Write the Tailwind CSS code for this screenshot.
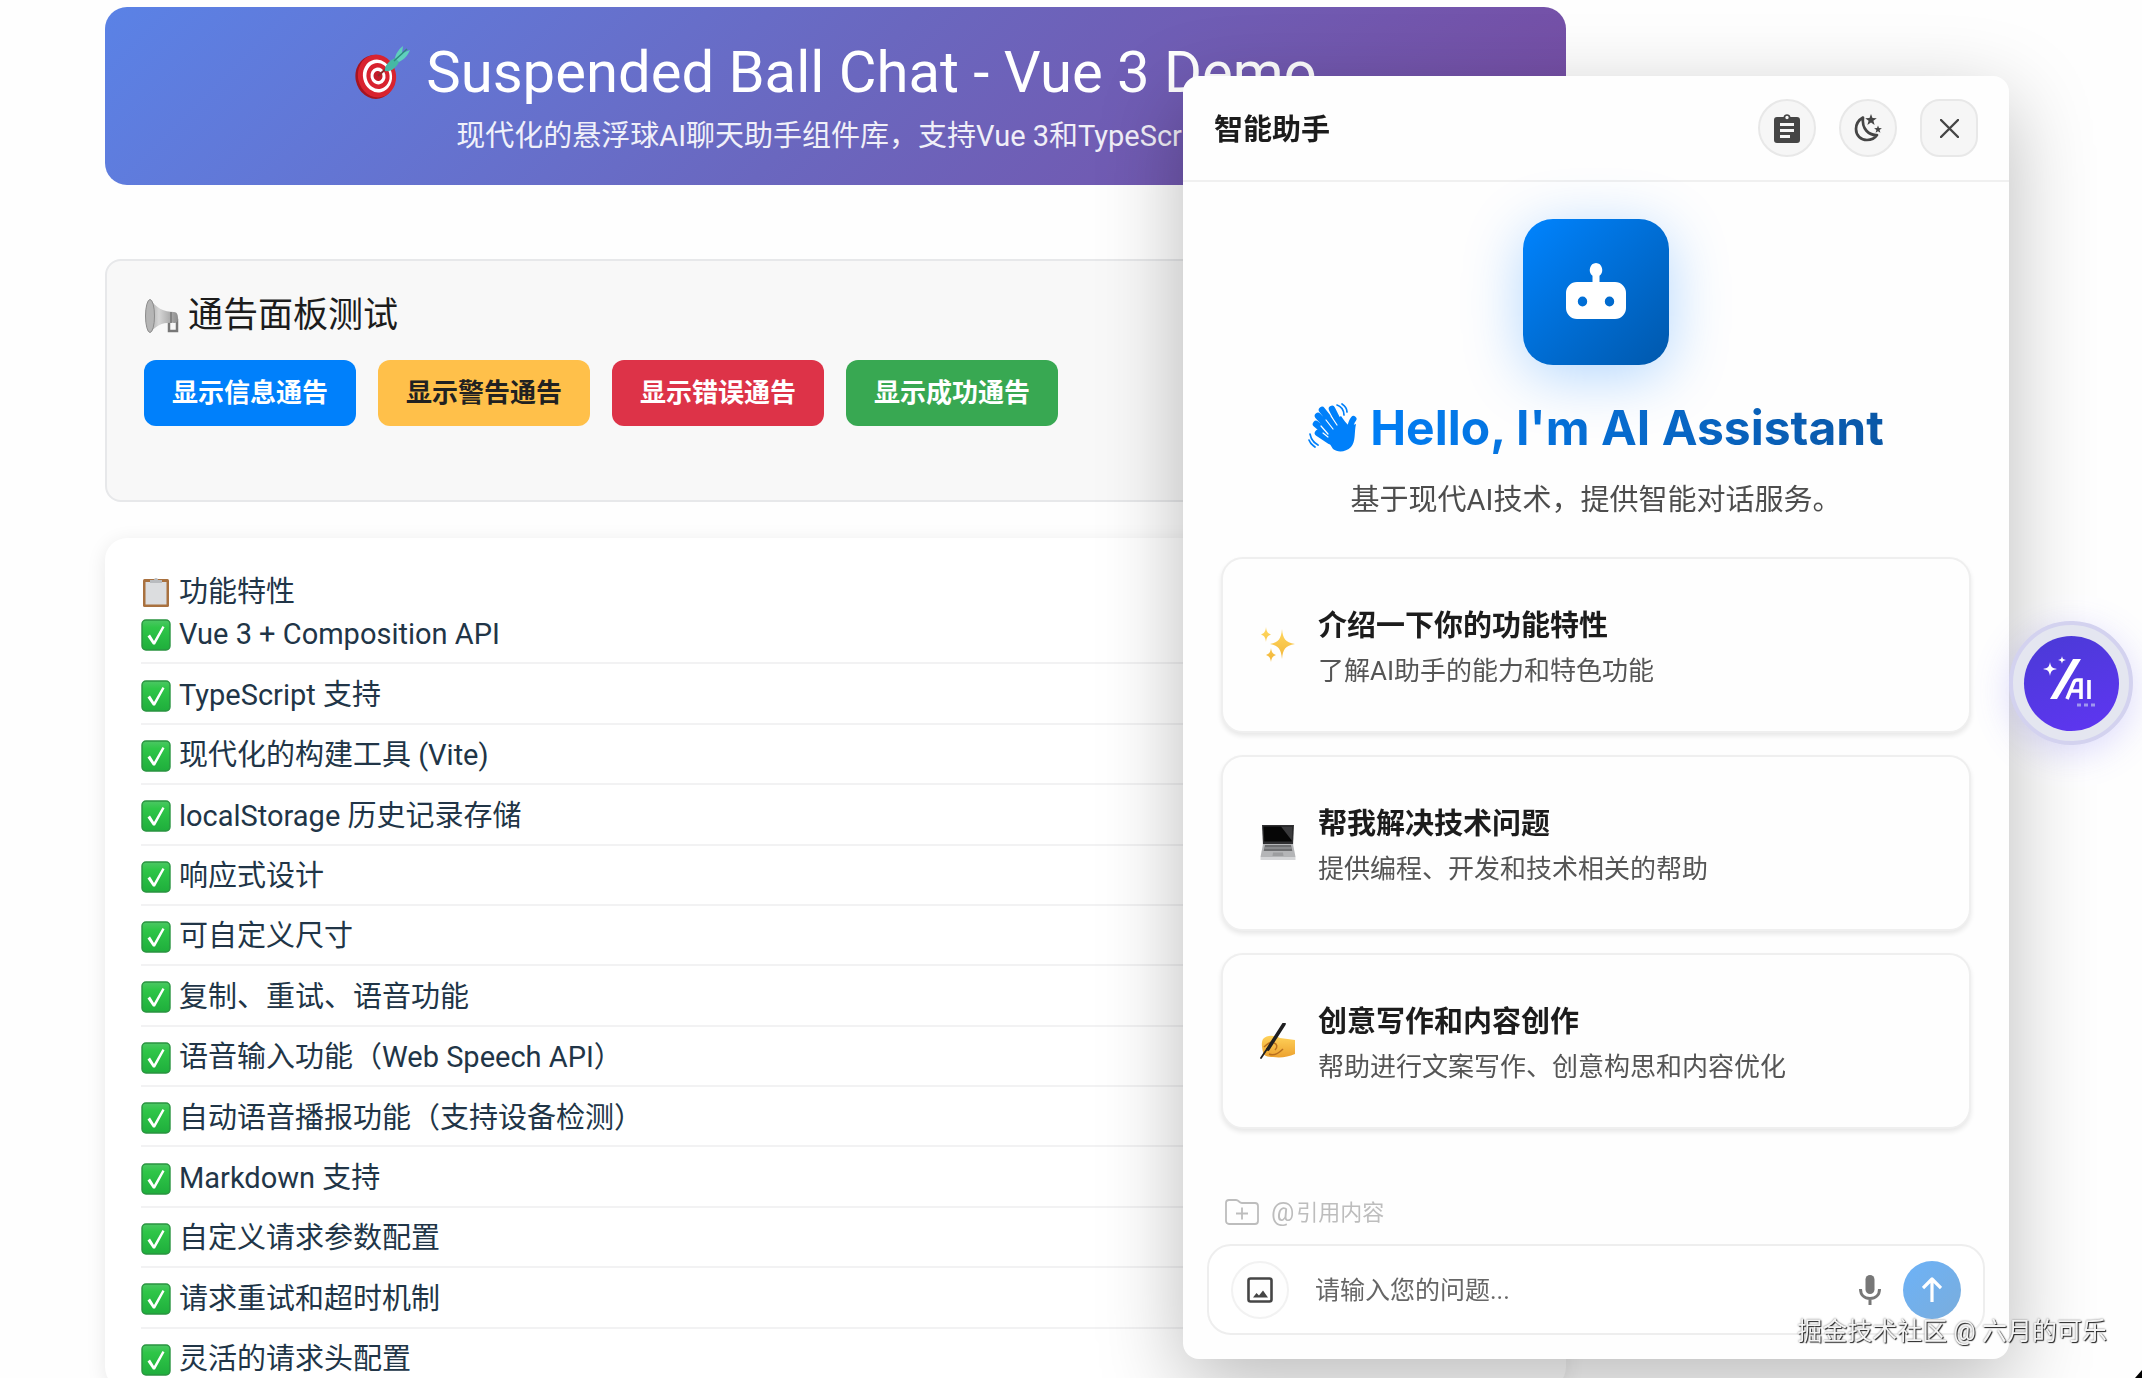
<!DOCTYPE html>
<html lang="zh-CN">
<head>
<meta charset="utf-8">
<meta name="viewport" content="width=device-width, initial-scale=1">
<title>Suspended Ball Chat - Vue 3 Demo</title>
<script src="https://cdn.jsdelivr.net/npm/@tailwindcss/browser@4"></script>
</head>
<body class="h-screen overflow-hidden bg-[#fefefe] font-[Roboto,'Noto_Sans_CJK_SC',sans-serif] text-[29px] text-[#213547]">

<!-- Shared glyphs -->
<svg class="absolute size-0" aria-hidden="true">
  <defs>
    <linearGradient id="checkFill" x1="0" y1="0" x2="0" y2="1">
      <stop offset="0" stop-color="#4cc764"/><stop offset=".25" stop-color="#2fc648"/><stop offset="1" stop-color="#1fae3c"/>
    </linearGradient>
    <linearGradient id="megaFill" x1="0" y1="0" x2="1" y2="0">
      <stop offset="0" stop-color="#9a9a9a"/><stop offset=".4" stop-color="#d6d6d6"/><stop offset="1" stop-color="#8e8e8e"/>
    </linearGradient>
    <linearGradient id="handFill" x1="0" y1="0" x2="0" y2="1">
      <stop offset="0" stop-color="#ffd25a"/><stop offset="1" stop-color="#eda22f"/>
    </linearGradient>
    <linearGradient id="starFill" x1="0" y1="0" x2="0" y2="1">
      <stop offset="0" stop-color="#ffd75e"/><stop offset="1" stop-color="#f3b73a"/>
    </linearGradient>
    <symbol id="check" viewBox="0 0 30 32">
      <rect x="1" y="1" width="28" height="30" rx="4" fill="url(#checkFill)" stroke="#2a9440" stroke-width="1.4"/>
      <path d="M6.500 17.500 9 15.500l4 6.500L21.500 7l2 1.200L14 25.500h-2z" fill="#fff"/>
    </symbol>
  </defs>
</svg>

<main class="flex flex-col pt-[7px] pl-[105px] pr-[576px]">
  <header class="flex h-[178px] flex-col items-center justify-center rounded-[22px] bg-linear-135 from-[#5a82e6] via-[#6a67bf] to-[#764ba2] text-white">
    <h1 class="flex items-center gap-4 whitespace-nowrap pt-1 text-[58px] leading-[68px]">
      <svg class="size-14" viewBox="0 0 56 56" aria-hidden="true">
        <ellipse cx="21" cy="33" rx="19.500" ry="22" transform="rotate(-12 21 33)" fill="#a51420"/>
        <ellipse cx="23" cy="32" rx="19" ry="21.500" transform="rotate(-12 23 32)" fill="#d8232f"/>
        <ellipse cx="23.500" cy="32" rx="14.500" ry="16.500" transform="rotate(-12 23.5 32)" fill="#fff"/>
        <ellipse cx="24" cy="32" rx="11.500" ry="13" transform="rotate(-12 24 32)" fill="#d8232f"/>
        <ellipse cx="24" cy="32" rx="7.500" ry="8.500" transform="rotate(-12 24 32)" fill="#fff"/>
        <ellipse cx="24" cy="32" rx="4.500" ry="5" transform="rotate(-12 24 32)" fill="#c41b28"/>
        <path d="M24 32 35 22" stroke="#8c2b2b" stroke-width="2"/>
        <path d="M31 27c-1-5 4-10 10-13l4 4c-3 6-8 10-14 9z" fill="#45b8a4"/>
        <path d="M41 14c1-5 5-10 8-12l-1 7 8-3c-2 5-5 9-11 12z" fill="#5fd0bd"/>
        <path d="M40 17 53 5" stroke="#2c8b7c" stroke-width="1.500"/>
      </svg>
      Suspended Ball Chat - Vue 3 Demo
    </h1>
    <p class="whitespace-nowrap pt-2 leading-[44px] opacity-90">现代化的悬浮球AI聊天助手组件库，支持Vue 3和TypeScript</p>
  </header>

  <section class="mt-[74px] h-[243px] rounded-2xl border-2 border-[#e7e8ea] bg-[#f8f8f8] px-[37px] pt-[29px]">
    <h2 class="flex items-center gap-2 text-[35px] leading-[52px] text-[#1c1c1c]">
      <svg class="size-9" viewBox="0 0 36 36" aria-hidden="true">
        <path d="M25 22h8v11h-8z" fill="none" stroke="#777" stroke-width="2.500"/>
        <path d="M6 1c6 9 14 13 24 13 3 0 4 3 4 6s-1 5-4 5c-10-1-18 2-24 10C1 26 1 10 6 1z" fill="url(#megaFill)"/>
        <ellipse cx="6" cy="18" rx="4.500" ry="16.500" fill="#b5b5b5" stroke="#8c8c8c"/>
        <path d="M27 14v11" stroke="#777" stroke-width="1.500"/>
      </svg>
      通告面板测试
    </h2>
    <div class="mt-[18px] flex gap-[22px] text-[26px] font-bold">
      <button class="h-[66px] w-[212px] rounded-xl bg-[#0080fb] text-white">显示信息通告</button>
      <button class="h-[66px] w-[212px] rounded-xl bg-[#ffc04a] text-[#212121]">显示警告通告</button>
      <button class="h-[66px] w-[212px] rounded-xl bg-[#dd3348] text-white">显示错误通告</button>
      <button class="h-[66px] w-[212px] rounded-xl bg-[#38a852] text-white">显示成功通告</button>
    </div>
  </section>

  <section class="mt-9 rounded-[22px] bg-white px-9 pt-9 shadow-[0_4px_20px_rgb(0_0_0/0.09)]">
    <h2 class="flex h-[30px] items-center gap-2 pt-1.5 leading-[30px]">
      <svg class="h-8 w-[30px] shrink-0" viewBox="0 0 30 32" aria-hidden="true">
        <rect x="2" y="3" width="26" height="28" rx="1.500" fill="#a9713f"/>
        <rect x="4.500" y="6" width="21" height="22.500" fill="#dcdddf"/>
        <path d="M9 7V4h4a2 2 0 0 1 4 0h4v3z" fill="#b9bbbe"/>
      </svg>
      功能特性
    </h2>
    <ul class="grid h-[785px] auto-rows-fr [&>li]:flex [&>li]:items-center [&>li]:gap-2 [&>li]:border-b-2 [&>li]:border-[#f2f2f3] [&>li]:pt-1 [&_svg]:h-8 [&_svg]:w-[30px]">
      <li><svg aria-hidden="true"><use href="#check"/></svg>Vue 3 + Composition API</li>
      <li><svg aria-hidden="true"><use href="#check"/></svg>TypeScript 支持</li>
      <li><svg aria-hidden="true"><use href="#check"/></svg>现代化的构建工具 (Vite)</li>
      <li><svg aria-hidden="true"><use href="#check"/></svg>localStorage 历史记录存储</li>
      <li><svg aria-hidden="true"><use href="#check"/></svg>响应式设计</li>
      <li><svg aria-hidden="true"><use href="#check"/></svg>可自定义尺寸</li>
      <li><svg aria-hidden="true"><use href="#check"/></svg>复制、重试、语音功能</li>
      <li><svg aria-hidden="true"><use href="#check"/></svg>语音输入功能（Web Speech API）</li>
      <li><svg aria-hidden="true"><use href="#check"/></svg>自动语音播报功能（支持设备检测）</li>
      <li><svg aria-hidden="true"><use href="#check"/></svg>Markdown 支持</li>
      <li><svg aria-hidden="true"><use href="#check"/></svg>自定义请求参数配置</li>
      <li><svg aria-hidden="true"><use href="#check"/></svg>请求重试和超时机制</li>
      <li><svg aria-hidden="true"><use href="#check"/></svg>灵活的请求头配置</li>
    </ul>
  </section>
</main>

<!-- Chat dialog -->
<aside class="fixed top-[76px] right-[133px] bottom-[19px] flex w-[826px] flex-col rounded-2xl bg-[#fefefe] text-[#1c1c1c] shadow-[0_26px_84px_rgb(0_0_0/0.27)]">
  <header class="flex h-[106px] shrink-0 items-center justify-between border-b-2 border-[#f0f0f0] px-[31px]">
    <h2 class="pt-1.5 font-bold">智能助手</h2>
    <div class="flex gap-[23px] text-[#454545] [&>button]:flex [&>button]:size-[58px] [&>button]:items-center [&>button]:justify-center [&>button]:border-2 [&>button]:border-[#e8e8e8] [&>button]:bg-[#f6f6f6]">
      <button class="rounded-full" aria-label="记录">
        <svg class="h-[29px] w-[26px]" viewBox="0 0 26 29" aria-hidden="true">
          <path fill="currentColor" fill-rule="evenodd" d="M3 3h6.500a3.600 3.600 0 0 1 7 0H23a3 3 0 0 1 3 3v20a3 3 0 0 1-3 3H3a3 3 0 0 1-3-3V6a3 3 0 0 1 3-3zm10-1.200a1.700 1.700 0 1 0 0 3.400 1.700 1.700 0 0 0 0-3.400zM6 9v3h14V9zm0 6v3h14v-3zm0 6v3h10v-3z"/>
        </svg>
      </button>
      <button class="rounded-full" aria-label="深色模式">
        <svg class="size-7" viewBox="0 0 28 28" aria-hidden="true">
          <path d="M9 3.500C5.500 5.500 2 9.500 2 15c0 6.500 4.800 11 11 11 4.500 0 8-2 10-5-8 .5-15.500-6-14-17.500z" fill="none" stroke="currentColor" stroke-width="2.700" stroke-linejoin="round"/>
          <path fill="currentColor" d="m17 0 1.500 4 4.300.2-3.400 2.600 1.200 4.200-3.600-2.400-3.600 2.400 1.200-4.200-3.400-2.600 4.300-.2z"/>
          <path fill="currentColor" d="m24 11.500 1 2.600 2.900.1-2.300 1.800.8 2.800-2.400-1.600-2.400 1.600.8-2.800-2.300-1.800 2.900-.1z"/>
        </svg>
      </button>
      <button class="rounded-[20px]" aria-label="关闭">
        <svg class="size-[19px]" viewBox="0 0 19 19" aria-hidden="true"><path d="m1 1 17 17M18 1 1 18" stroke="currentColor" stroke-width="2.400" stroke-linecap="round"/></svg>
      </button>
    </div>
  </header>

  <div class="flex grow flex-col items-center px-[38px] pt-[37px]">
    <div class="flex size-[146px] items-center justify-center rounded-[30px] bg-linear-135 from-[#0084ff] to-[#0058ac] shadow-[0_11px_60px_rgb(0_123_255/0.3)]">
      <svg class="h-[58px] w-16" viewBox="0 0 64 58" aria-hidden="true">
        <path fill="#fff" fill-rule="evenodd" d="M32 0a6.500 7 0 0 1 3.500 12.700V19H51a11 11 0 0 1 11 11v15a11 11 0 0 1-11 11H13A11 11 0 0 1 2 45V30a11 11 0 0 1 11-11h15.500v-6.300A6.500 7 0 0 1 32 0zM18.500 33.500a4.700 5 0 1 0 0 10 4.700 5 0 0 0 0-10zm27 0a4.700 5 0 1 0 0 10 4.700 5 0 0 0 0-10z"/>
      </svg>
    </div>
    <h1 class="mt-8 flex items-center gap-3 whitespace-nowrap font-[Inter,sans-serif] text-[48px] leading-[62px] font-bold">
      <svg class="size-[50px]" viewBox="0 0 50 50" aria-hidden="true">
        <g fill="none" stroke="#0080fa" stroke-width="6.500" stroke-linecap="round">
          <path d="M29 26 14 7M24 28 10 13M22 33 8 21M22 38 10 30M34 26 24 6"/>
          <path stroke-width="6" d="M41 32c1-6 1-12 4.500-16"/>
        </g>
        <path fill="#0080fa" d="M13 27 33 13c3 4 5 8 9 10l6-2c-2 9 0 17-5 23-5 5-13 6-18 2z"/>
        <path d="m18 17 7 9M13 23l7 8M23 13l6 9M15 30l5 4" stroke="#fff" stroke-width="1.200" stroke-linecap="round"/>
        <path d="M29 2c4 1 7 5 7 10M34 1c3 2 5 5 5 8M2 31c1 5 4 9 8 11M1 37c1 3 3 5 6 7" fill="none" stroke="#0080fa" stroke-width="1.700" stroke-linecap="round"/>
      </svg>
      <span class="bg-linear-90 from-[#007ef5] to-[#0a57a6] bg-clip-text text-transparent">Hello, I'm AI Assistant</span>
    </h1>
    <p class="mt-[18px] leading-[46px] text-[#4d4d4d]">基于现代AI技术，提供智能对话服务。</p>

    <div class="mt-[34px] grid w-full gap-[22px] [&>button]:flex [&>button]:h-[176px] [&>button]:items-center [&>button]:gap-[22px] [&>button]:rounded-[22px] [&>button]:border-2 [&>button]:border-[#efefef] [&>button]:bg-[#fefefe] [&>button]:px-[37px] [&>button]:text-left [&>button]:shadow-[0_3px_5px_rgb(0_0_0/0.09)] [&>button>span]:pt-1.5 [&_b]:block [&_b]:leading-[46px] [&_small]:block [&_small]:text-[26px] [&_small]:leading-[44px] [&_small]:text-[#555]">
      <button>
        <svg class="size-9" viewBox="0 0 36 36" aria-hidden="true" fill="url(#starFill)">
          <path d="M22 2c1 10 3 13 13 15-10 2-12 5-13 15-1-10-3-13-12-15 9-2 11-5 12-15z"/>
          <path d="M6 0c.6 5 2 6.500 5 7.500C8 8.500 6.600 10 6 15c-.6-5-2-6.500-5-7.500C4 6.500 5.400 5 6 0zM11 21c.6 4.500 2 6 5 7-3 1-4.400 2.500-5 7-.6-4.500-2-6-5-7 3-1 4.400-2.500 5-7z"/>
        </svg>
        <span><b>介绍一下你的功能特性</b><small>了解AI助手的能力和特色功能</small></span>
      </button>
      <button>
        <svg class="size-9" viewBox="0 0 36 36" aria-hidden="true">
          <path d="M2 0h32l-1 20H3z" fill="#2f2f31"/><path d="M3.500 1.500h29l-.8 15H4.300z" fill="#060606"/><path d="m21 1.500 11.500 0-.7 14z" fill="#3a3a3c"/>
          <path d="M3 19h30l2.500 13h-35z" fill="#b4b5b7"/><path d="M5 20h26l1.300 6H3.700z" fill="#6d6e70"/><path d="M4.500 23h27" stroke="#a5a6a8"/>
          <path d="M13 27.500h10l.5 3.500h-11z" fill="#9c9d9f"/><path d="M.5 32h35v3H.5z" fill="#d5d6d8"/>
        </svg>
        <span><b>帮我解决技术问题</b><small>提供编程、开发和技术相关的帮助</small></span>
      </button>
      <button>
        <svg class="size-9" viewBox="0 0 36 36" aria-hidden="true">
          <path d="M3 16c5-5 12-3 17-1l15 2v14c-7 3-14 4-22 3-5 0-10-1-10-5-1-5-2-9 0-13z" fill="url(#handFill)"/>
          <path d="M9 31c4 2 9 0 14-5M14 20c3 1 4 4 1 7M4 24c3-3 5-5 9-5" fill="none" stroke="#b9701f" stroke-width="1.500"/>
          <path d="M24 1 8 26" stroke="#1f1f21" stroke-width="3.600" stroke-linecap="round"/><path d="M7 26 1 35" stroke="#1f1f21" stroke-width="1.800" stroke-linecap="round"/>
        </svg>
        <span><b>创意写作和内容创作</b><small>帮助进行文案写作、创意构思和内容优化</small></span>
      </button>
    </div>
  </div>

  <footer class="px-6 pb-6">
    <button class="ml-[18px] flex h-8 items-center gap-3 text-[22px] text-[#bdbdbd]">
      <svg class="h-[26px] w-[34px]" viewBox="0 0 34 26" fill="none" stroke="currentColor" stroke-width="1.800" aria-hidden="true">
        <path d="M1 4a3 3 0 0 1 3-3h7c3 0 3 3 6 3h13a3 3 0 0 1 3 3v15a3 3 0 0 1-3 3H4a3 3 0 0 1-3-3zM17 8.500v12M11 14.500h12"/>
      </svg>
      <span class="flex items-center gap-0.5"><span class="text-[26px]">@</span>引用内容</span>
    </button>
    <div class="mt-4 flex h-[91px] items-center rounded-[24px] border-2 border-[#eeeeee] bg-white px-[22px]">
      <button class="flex size-[58px] shrink-0 items-center justify-center rounded-full border-2 border-[#f2f2f2] bg-[#fefefe] text-[#454545]" aria-label="上传图片">
        <svg class="size-[26px]" viewBox="0 0 26 26" aria-hidden="true">
          <rect x="1.500" y="1.500" width="23" height="23" rx="2" fill="none" stroke="currentColor" stroke-width="2.600"/>
          <path fill="currentColor" d="M6 20.500 9.500 16l2.500 2.500 4-5 5 7z"/>
        </svg>
      </button>
      <input class="ml-[26px] min-w-0 grow bg-transparent pt-0.5 text-[25px] outline-none placeholder:text-[#666] placeholder:opacity-100" type="text" placeholder="请输入您的问题..." aria-label="请输入您的问题">
      <button class="mr-[22px] text-[#777]" aria-label="语音输入">
        <svg class="h-[30px] w-[22px]" viewBox="0 0 22 30" aria-hidden="true">
          <rect x="6.500" width="9" height="19" rx="4.500" fill="currentColor"/>
          <path d="M1.500 14c0 6 4 9.500 9.500 9.500s9.500-3.500 9.500-9.500M11 23.500V30" fill="none" stroke="currentColor" stroke-width="3"/>
        </svg>
      </button>
      <button class="flex size-[58px] shrink-0 items-center justify-center rounded-full bg-linear-135 from-[#6cb2f8] to-[#7aaddc]" aria-label="发送">
        <svg class="h-[25px] w-5" viewBox="0 0 20 25" fill="none" stroke="#fff" stroke-width="3.200" stroke-linejoin="round" aria-hidden="true"><path d="M10 25V3M1 11l9-9 9 9"/></svg>
      </button>
    </div>
  </footer>
</aside>

<!-- Floating ball -->
<button class="fixed top-[621px] right-[9px] flex size-[124px] items-center justify-center rounded-full border-4 border-[#d3d2ef] bg-[#e4e6f0] shadow-[0_8px_36px_rgb(99_90_241/0.22)]" aria-label="打开AI助手">
  <span class="flex size-[95px] items-center justify-center rounded-full bg-linear-160 from-[#4a3ad6] to-[#5f35f2]">
    <svg class="h-[54px] w-[56px]" viewBox="0 0 56 54" aria-hidden="true">
      <g fill="#fff">
        <path d="M30 3h8L14 43H7z"/>
        <path d="M7 6c.9 5 2 6 7 7-5 1-6.100 2-7 7-.9-5-2-6-7-7 5-1 6.100-2 7-7zM19 0c.5 3 1.300 3.500 4 4-2.700.5-3.500 1-4 4-.5-3-1.300-3.500-4-4 2.700-.5 3.500-1 4-4z"/>
      </g>
      <path d="M24 43l7-17q1-2 3-2h4v19M28 35h10M46 24v19" fill="none" stroke="#fff" stroke-width="3.600"/>
      <path d="M34 49h4M41 49h4M48 49h4" stroke="#9f97ee" stroke-width="3"/>
    </svg>
  </span>
</button>

<!-- Watermark -->
<p class="fixed right-[35px] bottom-[27px] whitespace-nowrap text-[25px] leading-[38px] text-[#f4f4f4] [text-shadow:1px_1px_1px_#222,0_0_2px_#777]">掘金技术社区 @ 六月的可乐</p>

<svg class="fixed right-0 bottom-0 size-2" viewBox="0 0 8 8" aria-hidden="true"><path d="M8 0v8H1z"/></svg>
</body>
</html>
